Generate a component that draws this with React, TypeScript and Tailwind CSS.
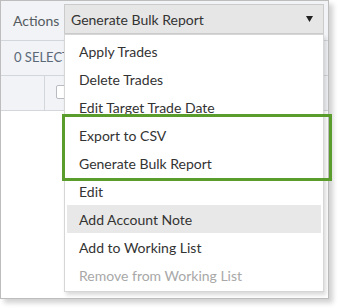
import React from "react";

const items = [
  "Apply Trades",
  "Delete Trades",
  "Edit Target Trade Date",
  "Export to CSV",
  "Generate Bulk Report",
  "Edit",
  "Add Account Note",
  "Add to Working List",
  "Remove from Working List",
];

export default function App() {
  return (
    <div
      className="w-[338px] h-[308px] bg-white"
      style={{ fontFamily: 'Lato, "Open Sans", sans-serif' }}
    >
      <div className="relative w-[329px] h-[299px] border border-[#bdbdbd] bg-white shadow-[4px_4px_5px_rgba(0,0,0,0.18)]">
        <div className="flex h-[40px] bg-[#f1f3f6] border-b border-[#d3d7dc] pt-[3px]">
          <div className="w-[63px] pl-[12px] pt-[6px] text-[14px] text-[#555b61]">Actions</div>
          <div className="flex w-[260px] h-[30px] items-center justify-between border border-[#cbcbcb] bg-[#e6e6e6] pl-[6px] pr-[9px] text-[14px] text-[#333]">
            <span>Generate Bulk Report</span>
            <svg width="7" height="6" viewBox="0 0 7 6" className="mr-[1px]">
              <path d="M0 0 H7 L3.5 6 Z" fill="#222" />
            </svg>
          </div>
        </div>
        <div className="flex h-[35px] items-center bg-[#f1f3f6] border-b border-[#d3d7dc] pl-[13px] text-[13px] text-[#5a6878]">
          0 SELECTED
        </div>
        <div className="flex h-[35px] bg-[#f1f3f6] border-b border-[#d3d7dc]">
          <div className="w-[44px] border-r border-[#d3d7dc]" />
          <div className="pl-[11px] pt-[9px]">
            <div className="w-[14px] h-[14px] rounded-[2px] border border-[#b8bcc2] bg-white" />
          </div>
        </div>

        <div className="absolute left-[63px] top-[33px] w-[260px] h-[258px] border border-[#d6d6d6] bg-white pt-[2px] shadow-[2px_3px_4px_rgba(0,0,0,0.15)]">
          {items.map((t, i) => (
            <div
              key={t}
              className={
                "mx-[2px] flex h-[28px] items-center pl-[12px] text-[14px] " +
                (i === 6 ? "bg-[#e8e8e8] " : "") +
                (i === 8 ? "text-[#a8a8a8]" : "text-[#333]")
              }
            >
              {t}
            </div>
          ))}
        </div>

        <div className="absolute left-[61px] top-[113px] w-[270px] h-[67px] border-[3px] border-[#5b9d2c]" />
      </div>
    </div>
  );
}
